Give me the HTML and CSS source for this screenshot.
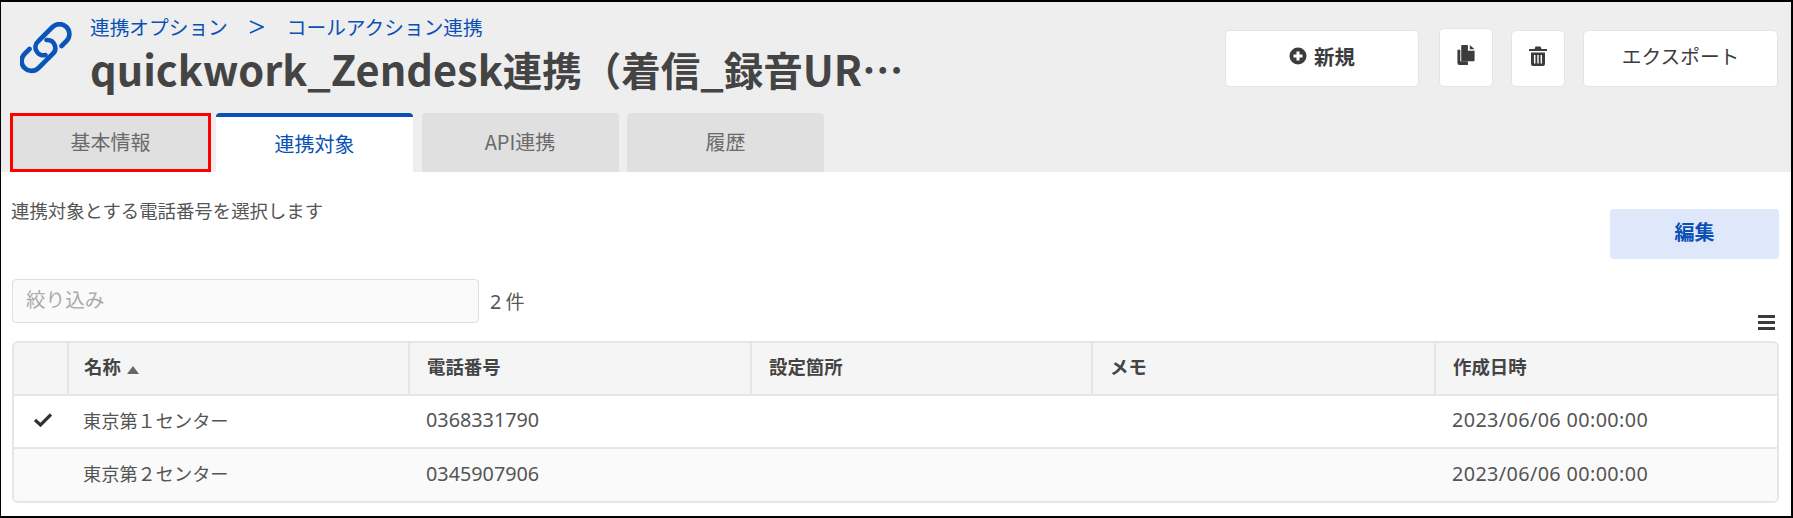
FILE: index.html
```html
<!DOCTYPE html>
<html lang="ja">
    <head>
        <meta charset="UTF-8">
        <title>quickwork_Zendesk連携</title>
        <link rel="stylesheet" href="styles.css">
    </head>
    <body>
        <div class="frame">
            <header class="pageHead">
                <div class="headTop">
                    <svg class="linkIcon" viewBox="20 22 52 52" fill="none" stroke="#0a55b9" stroke-width="4.6" stroke-linecap="round">
                        <path d="M61.5 46 L66.5 41 A9.8 9.8 0 0 0 52.5 27 L38.5 41 A8 8 0 0 0 45.5 55"/>
                        <path d="M29.5 49 L24.5 54 A9.8 9.8 0 0 0 38.5 68 L52.5 54 A8 8 0 0 0 46.5 40"/>
                    </svg>
                    <div class="titles">
                        <nav class="crumbs">
                            <a>連携オプション</a>
                            <svg class="crumbSep" viewBox="0 0 15 14" fill="none" stroke="#0a50b5" stroke-width="1.6"><path d="M1 1 L14 7 L1 13"/></svg>
                            <a>コールアクション連携</a>
                        </nav>
                        <h1 class="pageTitle">quickwork_Zendesk<span class="titleJa">連携（着信</span>_<span class="titleJa">録音</span>UR…</h1>
                    </div>
                    <div class="actions">
                        <button class="btn btnWide btnNew">
                            <svg class="btnIcon" viewBox="0 0 18 18">
                                <circle cx="9" cy="9" r="8.5" fill="#3c3c3c"/>
                                <path d="M9 4.5 V13.5 M4.5 9 H13.5" stroke="#fff" stroke-width="3"/>
                            </svg>
                            <b>新規</b>
                        </button>
                        <button class="btn btnIconOnly btnTall" title="コピー">
                            <svg class="btnIcon" viewBox="0 0 18 21">
                                <path d="M0 5 H3 V17 H11 V21 H2 Q0 21 0 19 Z" fill="#3c3c3c"/>
                                <path d="M4 1 Q4 0 5 0 H11 V6 H18 V16 Q18 17 17 17 H5 Q4 17 4 16 Z" fill="#3c3c3c"/>
                                <path d="M13 0 L18 4.5 H13 Z" fill="#3c3c3c"/>
                            </svg>
                        </button>
                        <button class="btn btnIconOnly" title="削除">
                            <svg class="btnIcon" viewBox="0 0 18 20">
                                <path d="M0 3 H5.5 L6.5 .5 H11.5 L12.5 3 H18 V5 H0 Z" fill="#3c3c3c"/>
                                <path d="M2 6.5 H16 V18 Q16 20 14 20 H4 Q2 20 2 18 Z" fill="#3c3c3c"/>
                                <path d="M5.7 9 V17.5 M9 9 V17.5 M12.3 9 V17.5" stroke="#fff" stroke-width="1.4"/>
                            </svg>
                        </button>
                        <button class="btn btnWide btnExport">エクスポート</button>
                    </div>
                </div>
                <div class="tabs">
                    <a class="tab tabMarked">基本情報</a>
                    <a class="tab tabActive">連携対象</a>
                    <a class="tab">API連携</a>
                    <a class="tab">履歴</a>
                </div>
            </header>
            <main class="content">
                <div class="introRow">
                    <p class="intro">連携対象とする電話番号を選択します</p>
                    <button class="editBtn">編集</button>
                </div>
                <div class="filterRow">
                    <input class="filter" type="text" placeholder="絞り込み">
                    <span class="count"><span class="num">2</span> 件</span>
                    <div class="menuIcon"><i></i><i></i><i></i></div>
                </div>
                <div class="tableWrap">
                    <table class="dataTable">
                        <colgroup>
                            <col class="colCheck"><col class="colName"><col class="colTel">
                            <col class="colPlace"><col class="colMemo"><col>
                        </colgroup>
                        <thead>
                            <tr>
                                <th></th>
                                <th>名称 <span class="sortMark"></span></th>
                                <th>電話番号</th>
                                <th>設定箇所</th>
                                <th>メモ</th>
                                <th>作成日時</th>
                            </tr>
                        </thead>
                        <tbody>
                            <tr>
                                <td class="checkCell">
                                    <svg class="check" viewBox="0 0 18 14" fill="none" stroke="#333" stroke-width="3.2"><path d="M1 7 L6.5 12 L17 1.5"/></svg>
                                </td>
                                <td>東京第１センター</td>
                                <td class="num">0368331790</td>
                                <td></td>
                                <td></td>
                                <td class="num date">2023/06/06 00:00:00</td>
                            </tr>
                            <tr>
                                <td></td>
                                <td>東京第２センター</td>
                                <td class="num">0345907906</td>
                                <td></td>
                                <td></td>
                                <td class="num date">2023/06/06 00:00:00</td>
                            </tr>
                        </tbody>
                    </table>
                </div>
            </main>
        </div>
    </body>
</html>
```

FILE: styles.css
```css
* {
    box-sizing: border-box; }

html, body {
    background: #000;
    width: 100%; height: 100%;
    margin: 0; padding: 0;
    overflow: hidden; }

body {
    padding: 2px 2px 2px 1px;
    color: #555;
    font-family: "Noto Sans CJK JP", "Noto Sans", sans-serif;
    font-size: 18px; }

.frame {
    background: #fff;
    height: 514px;
    display: flex;
    flex-direction: column; }

/* header */
.pageHead {
    background: #eee;
    height: 170px;
    display: flex;
    flex-direction: column; }
.headTop {
    height: 111px;
    display: flex;
    align-items: flex-start;
    padding: 0 13px 0 19px; }
.linkIcon {
    width: 52px; height: 52px;
    margin-top: 20px;
    flex: none; }
.titles {
    margin-left: 18px;
    width: 830px; }
.crumbs {
    color: #0a50b5;
    font-size: 19.7px;
    line-height: 28px;
    margin-top: 11px;
    display: flex;
    align-items: center; }
.crumbSep {
    width: 15px; height: 14px;
    margin: 0 23px 0 21px; }
.pageTitle {
    margin: 1px 0 0 0;
    color: #444;
    font-size: 41.5px;
    line-height: 52px;
    font-weight: 700;
    white-space: nowrap; }
.titleJa { font-size: 39.5px; }

.actions {
    margin-left: auto;
    height: 85px;
    display: flex;
    align-items: flex-end;
    gap: 18px; }
.btn {
    height: 57px;
    background: #fff;
    border: 1px solid #e4e4e4;
    border-radius: 5px;
    color: #3c3c3c;
    font-family: inherit;
    font-size: 19.7px;
    display: flex;
    align-items: center;
    justify-content: center;
    padding: 0 0 6px 0; }
.btnWide { width: 194px; }
.btnNew { margin-right: 2px; gap: 7px; font-size: 20.5px; }
.btnExport { width: 195px; }
.btnIconOnly { width: 54px; }
.btnTall { height: 59px; }
.btnIcon { width: 18px; height: 20px; }

/* tabs */
.tabs {
    height: 59px;
    display: flex;
    gap: 8.5px;
    padding-left: 9px; }
.tab {
    width: 197px;
    background: #e0e0e0;
    border-radius: 4px 4px 0 0;
    color: #6a6a6a;
    font-size: 20px;
    display: flex;
    align-items: center;
    justify-content: center;
    padding-bottom: 2px; }
.tabMarked {
    width: 201px;
    margin-right: -3.5px;
    border: 3px solid #f00;
    border-radius: 0; }
.tabActive {
    background: #fff;
    color: #0a50b5;
    border-top: 4px solid #0a50b5; }

/* content */
.content { padding: 0 12px 0 10px; }
.introRow {
    display: flex;
    justify-content: space-between;
    align-items: flex-start;
    height: 107px; }
.intro {
    margin: 24px 0 0 0;
    font-size: 18.4px;
    line-height: 28px; }
.editBtn {
    margin-top: 37px;
    width: 169px; height: 50px;
    background: #dfe7fb;
    border: none;
    border-radius: 4px;
    color: #0a50b5;
    font-family: inherit;
    font-size: 20px;
    font-weight: 700;
    padding: 0 0 6px 0; }

.filterRow {
    height: 57px;
    display: flex;
    align-items: flex-start; }
.filter {
    width: 467px; height: 44px;
    margin-left: 1px;
    background: #fafafa;
    border: 1px solid #dedede;
    border-radius: 4px;
    padding: 0 13px 6px 13px;
    font-family: inherit;
    font-size: 19.6px;
    outline: none; }
.filter::placeholder { color: #aaa; }
.count {
    margin: 8px 0 0 11px;
    font-size: 19px;
    line-height: 28px; }
.menuIcon {
    margin: 36px 4px 0 auto;
    width: 17px;
    display: flex;
    flex-direction: column;
    gap: 3px; }
.menuIcon i {
    display: block;
    height: 3px;
    background: #3c3c3c; }

/* table */
.tableWrap {
    margin: 5px 0 0 1px;
    border: 2px solid #e6e6e6;
    border-radius: 6px;
    overflow: hidden; }
.dataTable {
    width: 100%;
    table-layout: fixed;
    border-collapse: collapse; }
.colCheck { width: 54px; }
.colName { width: 341px; }
.colTel { width: 342px; }
.colPlace { width: 341px; }
.colMemo { width: 343px; }
.dataTable th {
    height: 52px;
    background: #f5f5f5;
    border-left: 2px solid #e6e6e6;
    border-bottom: 2px solid #e6e6e6;
    color: #444;
    font-size: 18.4px;
    font-weight: 700;
    text-align: left;
    padding: 0 0 6px 17px; }
.dataTable th:first-child { border-left: none; }
.dataTable td {
    height: 53px;
    border-bottom: 2px solid #e6e6e6;
    font-size: 18.2px;
    padding: 0 0 4px 17px; }
.dataTable th:nth-child(2), .dataTable td:nth-child(2) { padding-left: 15px; }
.dataTable tbody tr:nth-child(2) { background: #fafafa; }
.dataTable tbody tr:last-child td { border-bottom: none; }
.dataTable td.checkCell { padding: 0 0 4px 20px; }
.check { width: 18px; height: 14px; display: block; }
.sortMark {
    display: inline-block;
    margin-left: 2px;
    border-left: 6px solid transparent;
    border-right: 6px solid transparent;
    border-bottom: 8px solid #666; }
.dataTable td.num, .num {
    font-family: "Noto Sans", sans-serif;
    font-size: 19.8px; }
.dataTable td.date { letter-spacing: 0.38px; }
```
